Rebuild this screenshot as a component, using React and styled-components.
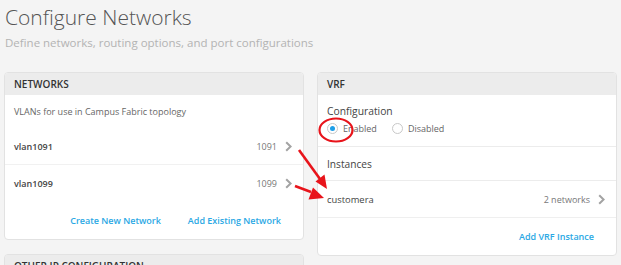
import React from "react";
import styled, { createGlobalStyle } from "styled-components";

const GlobalStyle = createGlobalStyle`
  html, body { margin: 0; padding: 0; }
  body {
    background: #f4f4f4;
    font-family: "Open Sans", "Noto Sans", sans-serif;
    color: #555;
    width: 621px;
    height: 265px;
    overflow: hidden;
  }
`;

const Page = styled.div`
  position: relative;
  padding: 0 4px;
  width: 621px;
  height: 265px;
  box-sizing: border-box;
  overflow: hidden;
`;

const Title = styled.h1`
  margin: 0;
  padding: 3px 0 0 1px;
  font-size: 21px;
  line-height: 28px;
  font-weight: 300;
  color: #555;
`;

const Subtitle = styled.p`
  margin: 0;
  padding: 1px 0 0 1px;
  font-size: 11.5px;
  line-height: 22px;
  font-weight: 400;
  color: #b3b3b3;
`;

const Columns = styled.div`
  display: grid;
  grid-template-columns: 300px 300px;
  gap: 13px;
  margin-top: 18px;
  align-items: start;
`;

const Column = styled.div`
  display: flex;
  flex-direction: column;
  gap: 14px;
`;

const Card = styled.section`
  background: #fff;
  border: 1px solid #e2e2e2;
  border-radius: 4px;
  overflow: hidden;
`;

const CardHeader = styled.div`
  height: 22px;
  display: flex;
  align-items: center;
  padding: 0 9px;
  background: #ececec;
  font-size: 10px;
  font-weight: 600;
  color: #333;
  text-transform: uppercase;
`;

const Description = styled.div`
  height: 32px;
  display: flex;
  align-items: center;
  padding: 0 9px;
  font-size: 9px;
  color: #666;
`;

const Row = styled.div`
  height: ${(p) => p.$h || 37}px;
  display: flex;
  align-items: center;
  justify-content: space-between;
  padding: 0 11px 0 9px;
  border-top: 1px solid ${(p) => (p.$line ? "#f1f1f1" : "transparent")};
  box-sizing: border-box;
`;

const RowName = styled.span`
  font-size: ${(p) => (p.$bold ? 9 : 9.4)}px;
  font-weight: ${(p) => (p.$bold ? 600 : 400)};
  color: #444;
`;

const RowValue = styled.span`
  display: flex;
  align-items: center;
  gap: 8px;
  font-size: 9px;
  color: #777;
`;

const Actions = styled.div`
  height: ${(p) => p.$h || 38}px;
  display: flex;
  align-items: center;
  justify-content: flex-end;
  gap: 27px;
  padding-right: 22px;
  border-top: 1px solid ${(p) => (p.$line ? "#efefef" : "transparent")};
  box-sizing: border-box;
`;

const LinkButton = styled.a`
  font-size: 9px;
  font-weight: 600;
  color: #2aa8e4;
  cursor: pointer;
`;

const Section = styled.div`
  padding: 8px 9px 9px;
  border-bottom: 1px solid #ececec;
`;

const SectionLabel = styled.div`
  font-size: 10.3px;
  line-height: 16px;
  color: #444;
`;

const SectionTitle = styled.div`
  height: 34px;
  display: flex;
  align-items: center;
  padding: 0 9px;
  font-size: 10.2px;
  color: #444;
  border-bottom: 1px solid #ececec;
  box-sizing: border-box;
`;

const RadioGroup = styled.div`
  display: flex;
  align-items: center;
  gap: 15px;
  height: 17px;
  margin-top: 1px;
`;

const RadioOption = styled.label`
  display: flex;
  align-items: center;
  gap: 5px;
  font-size: 9px;
  color: #666;
`;

const RadioCircle = styled.span`
  width: 9px;
  height: 9px;
  border-radius: 50%;
  border: 1px solid #c8c8c8;
  background: #fff;
  display: flex;
  align-items: center;
  justify-content: center;
  &::after {
    content: "";
    width: 5px;
    height: 5px;
    border-radius: 50%;
    background: ${(p) => (p.$checked ? "#1e9fe8" : "transparent")};
  }
`;

const Overlay = styled.svg`
  position: absolute;
  left: 0;
  top: 0;
  pointer-events: none;
`;

const Chevron = () => (
  <svg width="7" height="11" viewBox="0 0 7 11">
    <path d="M1.2 1.2 L5.6 5.5 L1.2 9.8" fill="none" stroke="#a3a3a3" strokeWidth="2" />
  </svg>
);

const Radio = ({ checked, children }) => (
  <RadioOption>
    <RadioCircle $checked={checked} />
    {children}
  </RadioOption>
);

export default function App() {
  return (
    <>
      <GlobalStyle />
      <Page>
        <Title>Configure Networks</Title>
        <Subtitle>Define networks, routing options, and port configurations</Subtitle>
        <Columns>
          <Column>
            <Card>
              <CardHeader>Networks</CardHeader>
              <Description>VLANs for use in Campus Fabric topology</Description>
              <Row>
                <RowName $bold>vlan1091</RowName>
                <RowValue>1091 <Chevron /></RowValue>
              </Row>
              <Row $line>
                <RowName $bold>vlan1099</RowName>
                <RowValue>1099 <Chevron /></RowValue>
              </Row>
              <Actions>
                <LinkButton>Create New Network</LinkButton>
                <LinkButton>Add Existing Network</LinkButton>
              </Actions>
            </Card>
            <Card>
              <CardHeader>Other IP Configuration</CardHeader>
            </Card>
          </Column>
          <Column>
            <Card>
              <CardHeader>VRF</CardHeader>
              <Section>
                <SectionLabel>Configuration</SectionLabel>
                <RadioGroup>
                  <Radio checked>Enabled</Radio>
                  <Radio>Disabled</Radio>
                </RadioGroup>
              </Section>
              <SectionTitle>Instances</SectionTitle>
              <Row $h={36}>
                <RowName>customera</RowName>
                <RowValue>2 networks <Chevron /></RowValue>
              </Row>
              <Actions $line $h={38}>
                <LinkButton>Add VRF Instance</LinkButton>
              </Actions>
            </Card>
          </Column>
        </Columns>
        <Overlay width="621" height="265" viewBox="0 0 621 265">
          <ellipse cx="336" cy="130" rx="16.5" ry="11.5" fill="none" stroke="#e8141b" strokeWidth="2.2" />
          <line x1="299" y1="150" x2="320" y2="179" stroke="#e8141b" strokeWidth="2.6" />
          <polygon points="327,189 315.5,181.5 324.5,174.5" fill="#e8141b" />
          <line x1="295" y1="186" x2="311" y2="192" stroke="#e8141b" strokeWidth="2.6" />
          <polygon points="324,198 308.5,199.5 313,187.5" fill="#e8141b" />
        </Overlay>
      </Page>
    </>
  );
}
